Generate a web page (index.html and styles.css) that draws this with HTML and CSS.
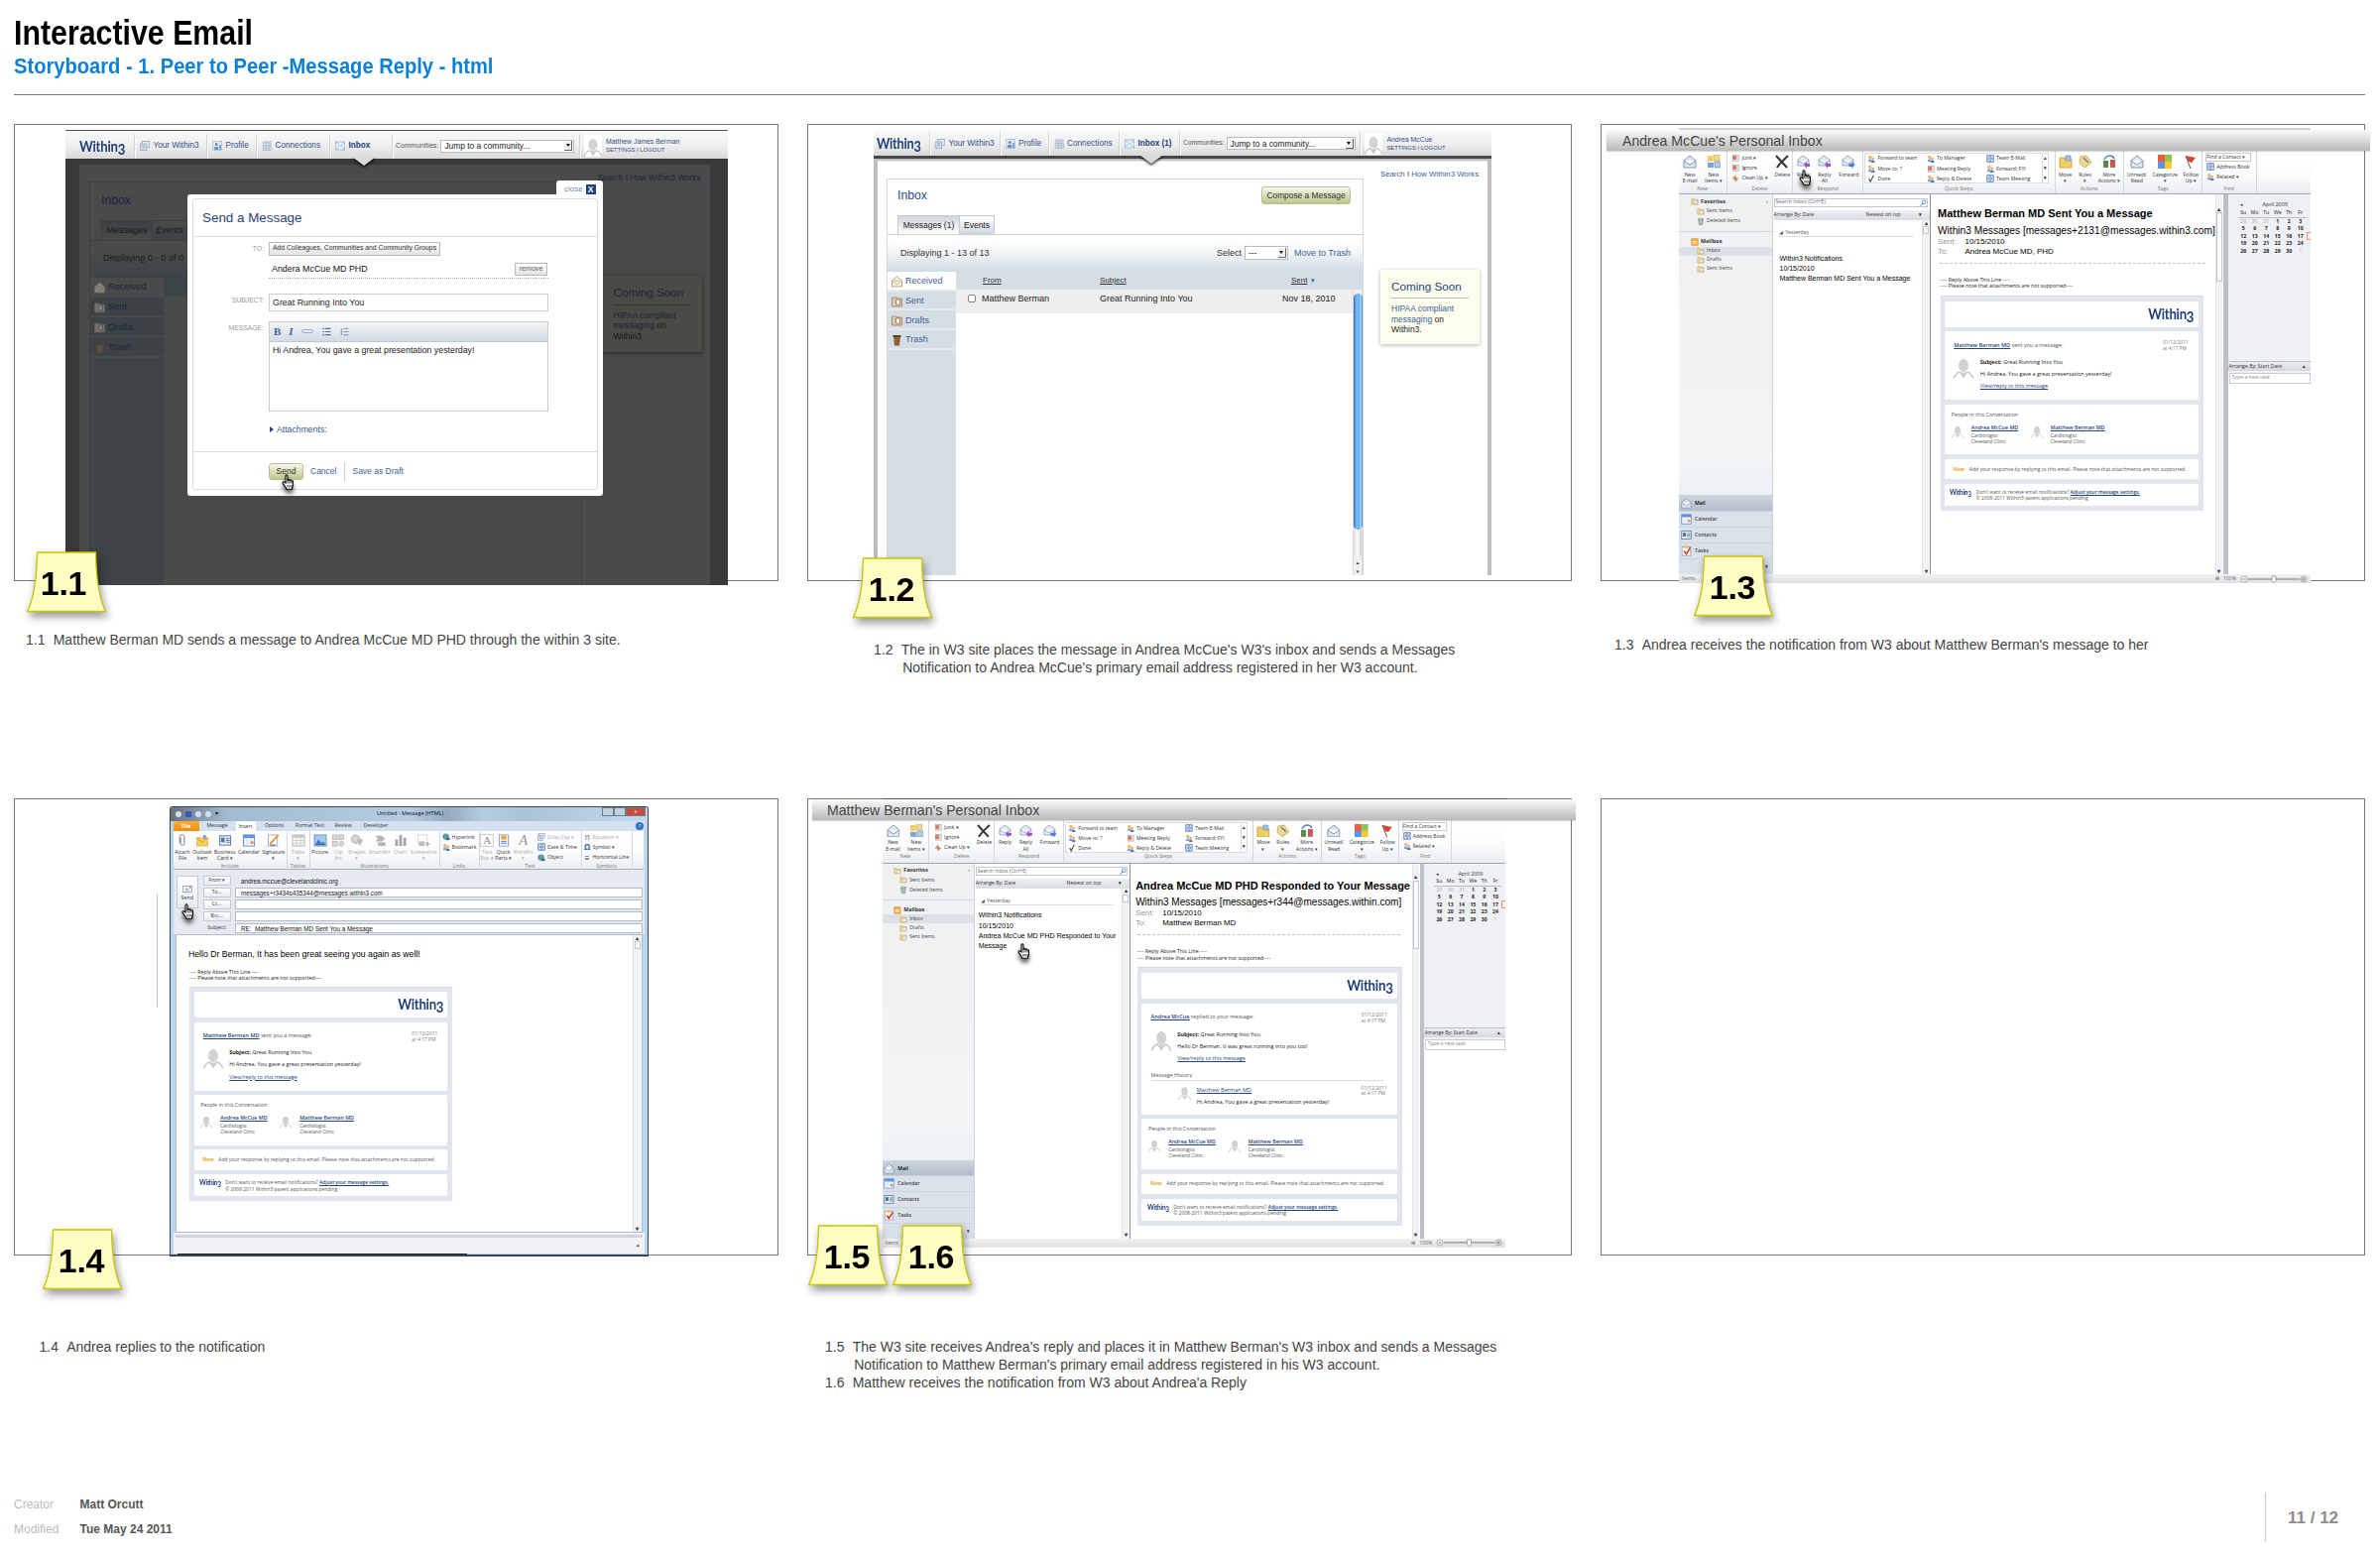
FILE: index.html
```html
<!DOCTYPE html>
<html lang="en">
<head>
<meta charset="utf-8">
<title>Interactive Email</title>
<link rel="stylesheet" href="styles.css">
</head>
<body>
<svg class="defs" aria-hidden="true">
  <symbol id="person" viewBox="0 0 20 20"><ellipse cx="10" cy="7" rx="5" ry="6.5" fill="#d2d2d2"/><path d="M0.5 20c1-4 4-6 6-6.500l3.500 5 3.500-5c2 .5 5 2.500 6 6.500" fill="none" stroke="#c6c6c6" stroke-width="1.500"/><path d="M8 14l2 6 2-6z" fill="#ccc"/></symbol>
  <symbol id="mail" viewBox="0 0 14 14"><path d="M1 6l6-5 6 5v7H1z" fill="#dfe8f2" stroke="#8499b3"/><path d="M1 6l6 4 6-4" fill="#fff" stroke="#8499b3"/></symbol>
  <symbol id="reply" viewBox="0 0 14 14"><path d="M1 5l5-4 6 4v6H1z" fill="#e4edf6" stroke="#8499b3" stroke-width=".8"/><path d="M1 6l5.500 3L12 6" fill="#fff" stroke="#8499b3" stroke-width=".8"/><path d="M7 10l3-3v2h3v3h-3v2z" fill="#a84bc8"/></symbol>
  <symbol id="forward" viewBox="0 0 14 14"><path d="M1 5l5-4 6 4v6H1z" fill="#e4edf6" stroke="#8499b3" stroke-width=".8"/><path d="M1 6l5.500 3L12 6" fill="#fff" stroke="#8499b3" stroke-width=".8"/><path d="M13.500 10l-3-3v2h-3v3h3v2z" fill="#4a7fd0"/></symbol>
  <symbol id="items" viewBox="0 0 14 14"><rect x="1" y="1" width="5" height="6" fill="#f3cf63"/><rect x="7" y="0" width="6" height="6" fill="#f6d98a" stroke="#b79a49" stroke-width=".5"/><rect x="1" y="8" width="6" height="5" fill="#7ca3d4"/><rect x="8" y="7" width="6" height="6" fill="#b6cbe5" stroke="#5079ae" stroke-width=".5"/></symbol>
  <symbol id="cross" viewBox="0 0 14 14"><path d="M1 1l11 12M13 1C9 5 5 8 2 13" stroke="#333" stroke-width="2" fill="none"/></symbol>
  <symbol id="folder" viewBox="0 0 14 14"><path d="M1 3h5l1 2h6v8H1z" fill="#f3cd62" stroke="#c79a36" stroke-width=".8"/><path d="M7 1h5v5H7z" fill="#9fc0e8" stroke="#5b82b8" stroke-width=".6"/></symbol>
  <symbol id="rules" viewBox="0 0 14 14"><path d="M2 2l6-1 5 7-7 5-5-5z" fill="#f4d886" stroke="#b99947" stroke-width=".7"/><path d="M5 3l5 5" stroke="#5b82b8" stroke-width="1.500"/></symbol>
  <symbol id="more" viewBox="0 0 14 14"><rect x="1" y="6" width="5" height="7" fill="#5b8a4e"/><rect x="8" y="5" width="5" height="8" fill="#c15a53"/><path d="M2 5c2-5 8-5 10-1" stroke="#5683b9" fill="none" stroke-width="1.500"/></symbol>
  <symbol id="cats" viewBox="0 0 14 14"><rect width="7" height="7" fill="#ed5b45"/><rect x="7" width="7" height="7" fill="#8fc64d"/><rect y="7" width="7" height="7" fill="#5b94e3"/><rect x="7" y="7" width="7" height="7" fill="#f7c832"/></symbol>
  <symbol id="flag" viewBox="0 0 14 14"><path d="M2 1l10 2-4 5-3-1z" fill="#e0402c"/><path d="M2 1l5 13" stroke="#556" stroke-width="1"/></symbol>
  <symbol id="people" viewBox="0 0 10 10"><circle cx="3.500" cy="3" r="2" fill="#f0b653"/><path d="M1 9c0-5 5-5 5 0z" fill="#7aa5dc"/><circle cx="7" cy="5" r="1.600" fill="#e9a06a"/><path d="M5 10c0-4 4.500-4 4.500 0z" fill="#4f77b5"/></symbol>
  <symbol id="tick" viewBox="0 0 10 10"><path d="M2 5l2 4 4-8" stroke="#444" fill="none" stroke-width="1.300"/></symbol>
  <symbol id="nofolk" viewBox="0 0 10 10"><rect x="2" y="2" width="7" height="7" fill="#e7ecf2" stroke="#8a99ad" stroke-width=".7"/><circle cx="4" cy="5" r="2.800" fill="#e2795a"/></symbol>
  <symbol id="broom" viewBox="0 0 10 10"><path d="M5 1v8M1 5h8" stroke="#e0a93a" stroke-width="2"/><path d="M3 3l4 4" stroke="#a25bb8" stroke-width="1.500"/></symbol>
  <symbol id="book" viewBox="0 0 10 10"><rect x="1" y="1" width="8" height="8" fill="#dfe9f6" stroke="#3d67ab"/><path d="M5 1v8M3 6V4M7 6V4" stroke="#3d67ab"/></symbol>
  <symbol id="sfolder" viewBox="0 0 10 10"><path d="M1 2h3l1 1h4v6H1z" fill="#f5da83" stroke="#c9a24b" stroke-width=".7"/><rect x="4" y="4" width="4.500" height="4.500" fill="#e9f0f8" stroke="#8fa7c6" stroke-width=".5"/></symbol>
  <symbol id="box" viewBox="0 0 10 10"><rect x="1" y="1" width="8" height="8" fill="#f3a640" stroke="#d98a1f" stroke-width=".7"/><path d="M2 4.500h6M2 6.500h6" stroke="#fff" stroke-width="1"/></symbol>
  <symbol id="bin" viewBox="0 0 10 10"><path d="M2 2h6L7 9.500H3z" fill="#a9c3b4" stroke="#5a7d73" stroke-width=".7"/><ellipse cx="5" cy="2" rx="3" ry="1" fill="#dce9e2" stroke="#5a7d73" stroke-width=".5"/></symbol>
  <symbol id="hand" viewBox="0 0 14 16"><path d="M4 9V1.800c0-1.400 2-1.400 2 0V6l1-.5 1 .8 1.200-.4.8.9 1.400.1V11c0 2-.9 2.500-.9 4.300H5C4.600 13 1.800 11 1 9c-.3-1.200 1-1.600 1.800-.8z" fill="#fff" stroke="#000" stroke-width="1.100"/><path d="M6 6v3.500M8 6.500V9.500M10 7v2.500M6 11v2.500M8 11v2.500M10 11v2.500" stroke="#000" stroke-width=".8"/></symbol>
  <symbol id="note" viewBox="0 0 80 62"><path d="M10.500 1h59C70 20 71 42 79.300 60.500H.7C9 42 10 20 10.500 1z" fill="#fefdc3" stroke="#c9c400" stroke-width="1.300"/></symbol>
  <symbol id="lens" viewBox="0 0 10 10"><circle cx="6" cy="4" r="2.800" fill="#e4f1fc" stroke="#3e78b9"/><path d="M4 6L1 9.500" stroke="#3e78b9" stroke-width="1.400"/></symbol>
  <symbol id="pg" viewBox="0 0 10 10"><rect x="2" y=".5" width="7" height="6" fill="#e9f0f7" stroke="#8ba4c0" stroke-width=".8"/><rect x=".5" y="3" width="6" height="6.500" fill="#dbe6f0" stroke="#8ba4c0" stroke-width=".8"/><path d="M2 5h3M2 7h3" stroke="#6f93bb" stroke-width=".8"/></symbol>
  <symbol id="prof" viewBox="0 0 10 10"><rect x=".5" y=".5" width="9" height="9" fill="#e3ebf3" stroke="#9db3cb" stroke-width=".7"/><circle cx="4" cy="3.500" r="1.500" fill="#5f8fc4"/><path d="M2 9V6h4v3zM7 9V4h1.500v5z" fill="#5f8fc4"/></symbol>
  <symbol id="conn" viewBox="0 0 10 10"><g fill="#dce6ef" stroke="#95acc5" stroke-width=".7"><circle cx="2" cy="1.800" r="1.200"/><circle cx="5" cy="1.800" r="1.200"/><circle cx="8" cy="1.800" r="1.200"/><path d="M1 4h2v5.500H1zM4 4h2v5.500H4zM7 4h2v5.500H7z"/></g></symbol>
  <symbol id="inb" viewBox="0 0 10 10"><rect x=".5" y="1" width="9" height="8" fill="#eef4fa" stroke="#8fb0d4" stroke-width=".8"/><path d="M.5 1L5 5.500 9.500 1M.5 9L4 5M9.500 9L6 5" fill="none" stroke="#8fb0d4" stroke-width=".8"/></symbol>
  <symbol id="open" viewBox="0 0 12 12"><path d="M1 5l5-4 5 4v6H1z" fill="#fbf6ee" stroke="#b8976d" stroke-width=".9"/><path d="M3 5h6M1 5l5 4 5-4" fill="none" stroke="#b8976d" stroke-width=".8"/></symbol>
  <symbol id="bfold" viewBox="0 0 12 12"><path d="M1 2h4l1 1h5v8H1z" fill="#dccab2" stroke="#a3835c" stroke-width=".9"/><path d="M5 4h4v5H5z" fill="#fff" stroke="#8e6c43" stroke-width=".8"/></symbol>
  <symbol id="cup" viewBox="0 0 12 12"><path d="M2.500 2h7l-1 9.500h-5z" fill="#8c6236"/><path d="M2 1h8v2H2z" fill="#5d3d1b"/></symbol>
  <symbol id="clip" viewBox="0 0 14 14"><path d="M5 4v6c0 3 4 3 4 0V3c0-3-5-3-5 0v7" fill="none" stroke="#777" stroke-width="1"/></symbol>
  <symbol id="oitem" viewBox="0 0 14 14"><path d="M1 4h12v9H1z" fill="#f6cf58" stroke="#c79a36" stroke-width=".6"/><path d="M1 4l6 5 6-5" fill="none" stroke="#c79a36"/><path d="M8 1h3v4H8z" fill="#7b9bd0"/></symbol>
  <symbol id="card" viewBox="0 0 14 14"><rect x="1" y="2" width="12" height="10" fill="#e6eef8" stroke="#56749d"/><rect x="2.500" y="4" width="4" height="5" fill="#56749d"/><path d="M8 5h4M8 7h4M8 9h4" stroke="#56749d"/></symbol>
  <symbol id="cal" viewBox="0 0 14 14"><rect x="1" y="1" width="12" height="12" fill="#fff" stroke="#5d86c5"/><rect x="1" y="1" width="12" height="3.500" fill="#5d93e0"/><path d="M1 7.500h12M1 10h12M5 4v9M9 4v9" stroke="#b7c8e0" stroke-width=".6"/><rect x="9" y="8" width="3" height="2.500" fill="#e7814b"/></symbol>
  <symbol id="sign" viewBox="0 0 14 14"><rect x="1" y="1" width="10" height="12" fill="#fff" stroke="#8a9bb5" stroke-width=".8"/><path d="M3 11l9-10" stroke="#d89a36" stroke-width="2"/><path d="M3 12h6" stroke="#446"/></symbol>
  <symbol id="task" viewBox="0 0 14 14"><rect x="1.500" y="2" width="11" height="11" fill="#fff" stroke="#8a9bb5"/><rect x="4" y=".5" width="5" height="3" fill="#f3bd4a"/><path d="M4 7l3 4 5-8" fill="none" stroke="#d93a2b" stroke-width="2"/></symbol>
  <symbol id="tbl" viewBox="0 0 14 14"><rect x=".5" y="1" width="13" height="12" fill="#f6f6f6" stroke="#b3b3b3"/><rect x="1" y="1" width="12" height="3" fill="#c4c4c4"/><path d="M1 7h12M1 10h12M5 4v9M9 4v9" stroke="#c4c4c4" stroke-width=".7"/></symbol>
  <symbol id="art" viewBox="0 0 14 14"><g fill="#d9d9d9" stroke="#adadad" stroke-width=".8"><rect x="1" y="1" width="5" height="5"/><rect x="8" y="1" width="5" height="5"/><rect x="1" y="8" width="5" height="5"/><circle cx="10.500" cy="10.500" r="2.500"/></g></symbol>
  <symbol id="pic" viewBox="0 0 14 14"><rect x=".5" y="1" width="13" height="12" fill="#9fc9f3" stroke="#7b95b3"/><path d="M1 12l4-6 3 4 2-2 3 4z" fill="#3b76b8"/></symbol>
  <symbol id="shape" viewBox="0 0 14 14"><circle cx="5.500" cy="5.500" r="4.500" fill="#d6d6d6" stroke="#aaa"/><path d="M7 5h6v3l-3 5-3-5z" fill="#bdbdbd"/></symbol>
  <symbol id="smart" viewBox="0 0 14 14"><path d="M2 2h7l4 3-4 3H2l3-3zM5 9h8v4H5z" fill="#b5b5b5"/></symbol>
  <symbol id="chart" viewBox="0 0 14 14"><path d="M1 6h3v7H1zM5.500 1h3v12h-3zM10 4h3v9h-3z" fill="#a5a5a5"/></symbol>
  <symbol id="shot" viewBox="0 0 14 14"><rect x="1" y="1" width="10" height="8" fill="none" stroke="#b5b5b5" stroke-dasharray="1.500 1"/><rect x="2" y="8" width="6" height="5" fill="#bbb"/><path d="M9 11h5M11.500 8.500v5" stroke="#999"/></symbol>
  <symbol id="parts" viewBox="0 0 14 14"><rect x="2" y="1" width="10" height="12" fill="#fff" stroke="#8a9bb5"/><rect x="4" y="2" width="6" height="4" fill="#f0a440"/><path d="M4 8h6M4 10h6" stroke="#5d93e0" stroke-width="1.400"/></symbol>
  <symbol id="globe" viewBox="0 0 10 10"><circle cx="4.500" cy="4.500" r="4" fill="#4a93c8"/><path d="M2 3l3-1 1 3-3 2z" fill="#69b34c"/><rect x="5" y="6" width="4.500" height="3" fill="#4a6b95"/></symbol>
</svg>

<header class="top">
  <h1>Interactive Email</h1>
  <h2>Storyboard - 1. Peer to Peer -Message Reply - html</h2>
</header>

<main class="board">
  <!-- 1.1 compose in the site -->
  <section class="cell">
    <div class="frame">
      <div class="screen site s1">
        <div class="sitebar">
          <div class="logo">Within<i>3</i></div>
          <div class="nv"><svg><use href="#pg"/></svg>Your Within3</div>
          <div class="nv"><svg><use href="#prof"/></svg>Profile</div>
          <div class="nv"><svg><use href="#conn"/></svg>Connections</div>
          <div class="nv on"><svg><use href="#inb"/></svg>Inbox</div>
          <div class="nv comm">Communities: <span class="sel">Jump to a community...<b></b></span></div>
          <div class="nv user"><svg><use href="#person"/></svg><p>Matthew James Berman<br><small>SETTINGS I LOGOUT</small></p></div>
        </div>
        <div class="dark">
          <div class="how"><a>Search</a> I <a>How Within3 Works</a></div>
          <div class="cols">
            <div class="panel">
              <div class="ptitle">Inbox</div>
              <div class="tabs"><span class="act">Messages</span><span>Events</span></div>
              <div class="disp">Displaying 0 - 0 of 0</div>
              <div class="boxes">
                <div class="folders"><p class="rec"><svg><use href="#open"/></svg>Received</p><p><svg><use href="#bfold"/></svg>Sent</p><p><svg><use href="#bfold"/></svg>Drafts</p><p><svg><use href="#cup"/></svg>Trash</p></div>
                <div class="thead"></div>
              </div>
            </div>
            <div class="soon"><h4>Coming Soon</h4><a>HIPAA compliant<br>messaging</a> on<br>Within3.</div>
          </div>
        </div>
        <div class="arrow"></div>
        <div class="modal">
          <div class="close">close <b>X</b></div>
          <div class="mbody">
            <div class="mtitle">Send a Message</div>
            <div class="form">
              <label>TO:</label>
              <div class="to"><span class="gbtn">Add Colleagues, Communities and Community Groups</span><div class="who">Andera McCue MD PHD<span class="gbtn rm">remove</span></div></div>
              <label>SUBJECT:</label>
              <div class="field">Great Running Into You</div>
              <label>MESSAGE:</label>
              <div class="editor"><div class="tool"><b>B</b><i>I</i><u></u><svg viewBox="0 0 10 10"><path d="M1 1.500h2M1 5h2M1 8.500h2M4 1.500h6M4 5h6M4 8.500h6" stroke="#4d6c9b" stroke-width="1.300"/></svg><svg viewBox="0 0 10 10"><path d="M2 1v8M4 1.500h6M4 5h6M4 8.500h6" stroke="#7f93b3" stroke-width="1.100"/></svg></div><div class="txt">Hi Andrea, You gave a great presentation yesterday!</div></div>
            </div>
            <div class="att"><b></b>Attachments:</div>
            <div class="acts"><span class="green">Send</span><a>Cancel</a><a class="sv">Save as Draft</a></div>
          </div>
        </div>
        <svg class="hand h1"><use href="#hand"/></svg>
      </div>
      <div class="note n1"><svg><use href="#note"/></svg><b>1.1</b></div>
    </div>
    <div class="cap c1"><span>1.1</span><p>Matthew Berman MD sends a message to Andrea McCue MD PHD through the within 3 site.</p></div>
  </section>

  <!-- 1.2 inbox in the site -->
  <section class="cell">
    <div class="frame">
      <div class="screen site s2">
        <div class="sitebar">
          <div class="logo">Within<i>3</i></div>
          <div class="nv"><svg><use href="#pg"/></svg>Your Within3</div>
          <div class="nv"><svg><use href="#prof"/></svg>Profile</div>
          <div class="nv"><svg><use href="#conn"/></svg>Connections</div>
          <div class="nv on"><svg><use href="#inb"/></svg>Inbox (1)</div>
          <div class="nv comm">Communities: <span class="sel">Jump to a community...<b></b></span></div>
          <div class="nv user"><svg><use href="#person"/></svg><p>Andrea McCue<br><small>SETTINGS I LOGOUT</small></p></div>
        </div>
        <div class="light">
          <div class="panel">
            <div class="ptitle">Inbox<span class="green">Compose a Message</span></div>
            <div class="tabs"><span class="act">Messages (1)</span><span>Events</span></div>
            <div class="disp">Displaying 1 - 13 of 13<em>Select</em><span class="sel">---<b></b></span><a>Move to Trash</a></div>
            <div class="boxes">
              <div class="folders"><p class="rec"><svg><use href="#open"/></svg>Received</p><p><svg><use href="#bfold"/></svg>Sent</p><p><svg><use href="#bfold"/></svg>Drafts</p><p><svg><use href="#cup"/></svg>Trash</p></div>
              <div class="mails">
                <div class="thead"><u>From</u><u>Subject</u><span><u>Sent</u> <small>▼</small></span></div>
                <div class="mrow"><i></i><span>Matthew Berman</span><span>Great Running Into You</span><span>Nov 18, 2010</span></div>
              </div>
              <div class="aqua"><div class="thumb"></div><div class="rest"></div><b>▲</b><b>▼</b></div>
            </div>
          </div>
          <div class="side">
            <div class="how"><a>Search</a> I <a>How Within3 Works</a></div>
            <div class="soon"><h4>Coming Soon</h4><a>HIPAA compliant<br>messaging</a> on<br>Within3.</div>
          </div>
        </div>
        <div class="arrow"></div>
      </div>
      <div class="note n2"><svg><use href="#note"/></svg><b>1.2</b></div>
    </div>
    <div class="cap c2"><span>1.2</span><p>The in W3 site places the message in Andrea McCue's W3's inbox and sends a Messages<br><s></s>Notification to Andrea McCue's primary email address registered in her W3 account.</p></div>
  </section>

  <!-- 1.3 notification in Andrea's mail client -->
  <section class="cell">
    <div class="frame">
      <div class="strip st3"></div>
      <div class="screen ol o3">
        <div class="rib">
          <div class="g"><div class="r"><p class="bb"><svg><use href="#mail"/></svg>New<br>E-mail</p><p class="bb"><svg><use href="#items"/></svg>New<br>Items ▾</p></div><h6>New</h6></div>
          <div class="g"><div class="r"><div class="sm"><p><svg><use href="#nofolk"/></svg>Junk ▾</p><p><svg><use href="#nofolk"/></svg>Ignore</p><p><svg><use href="#broom"/></svg>Clean Up ▾</p></div><p class="bb"><svg><use href="#cross"/></svg>Delete</p></div><h6>Delete</h6></div>
          <div class="g"><div class="r"><p class="bb"><svg><use href="#reply"/></svg>Reply</p><p class="bb"><svg><use href="#reply"/></svg>Reply<br>All</p><p class="bb"><svg><use href="#forward"/></svg>Forward</p></div><h6>Respond</h6></div>
          <div class="g"><div class="r"><div class="qs"><p><svg><use href="#people"/></svg>Forward to team</p><p><svg><use href="#people"/></svg>To Manager</p><p><svg><use href="#book"/></svg>Team E-Mail</p><p><svg><use href="#people"/></svg>Move to: ?</p><p><svg><use href="#nofolk"/></svg>Meeting Reply</p><p><svg><use href="#people"/></svg>Forward: FYI</p><p><svg><use href="#tick"/></svg>Done</p><p><svg><use href="#people"/></svg>Reply &amp; Delete</p><p><svg><use href="#book"/></svg>Team Meeting</p></div><div class="spin"><b>▴</b><b>▾</b><b>▾</b></div></div><h6>Quick Steps</h6></div>
          <div class="g"><div class="r"><p class="bb"><svg><use href="#folder"/></svg>Move<br>▾</p><p class="bb"><svg><use href="#rules"/></svg>Rules<br>▾</p><p class="bb"><svg><use href="#more"/></svg>More<br>Actions ▾</p></div><h6>Actions</h6></div>
          <div class="g"><div class="r"><p class="bb"><svg><use href="#mail"/></svg>Unread/<br>Read</p><p class="bb"><svg><use href="#cats"/></svg>Categorize<br>▾</p><p class="bb"><svg><use href="#flag"/></svg>Follow<br>Up ▾</p></div><h6>Tags</h6></div>
          <div class="g"><div class="r"><div class="sm"><p class="fc">Find a Contact ▾</p><p><svg><use href="#book"/></svg>Address Book</p><p><svg><use href="#people"/></svg>Related ▾</p></div></div><h6>Find</h6></div>
        </div>
        <div class="main">
          <div class="nav">
            <div class="tree"><p class="hd"><svg><use href="#sfolder"/></svg><b>Favorites</b><em>‹</em></p><p><svg><use href="#sfolder"/></svg>Sent Items</p><p><svg><use href="#bin"/></svg>Deleted Items</p><p class="hd mb"><svg><use href="#box"/></svg><b>Mailbox</b></p><p class="cur"><svg><use href="#sfolder"/></svg>Inbox</p><p><svg><use href="#sfolder"/></svg>Drafts</p><p><svg><use href="#sfolder"/></svg>Sent Items</p></div>
            <div class="mods"><p class="mm"><svg><use href="#mail"/></svg>Mail</p><p><svg><use href="#cal"/></svg>Calendar</p><p><svg><use href="#card"/></svg>Contacts</p><p><svg><use href="#task"/></svg>Tasks</p><p class="l">▾</p></div>
          </div>
          <div class="list">
            <div class="srch">Search Inbox (Ctrl+E)<svg><use href="#lens"/></svg></div>
            <div class="arr"><span>Arrange By: Date</span><span>Newest on top</span><b>▾</b></div>
            <div class="lb">
              <div class="li"><div class="yest">◢ &nbsp;Yesterday</div><p>Within3 Notifications<br>10/15/2010<br>Matthew Berman MD Sent You a Message</p></div>
              <div class="sb"><b>▴</b><i></i><b>▾</b></div>
            </div>
          </div>
          <div class="read">
            <div class="rc">
              <h3>Matthew Berman MD Sent You a Message</h3>
              <div class="from">Within3 Messages [messages+2131@messages.within3.com]</div>
              <div class="meta"><span>Sent:</span>10/15/2010</div>
              <div class="meta"><span>To:</span>Andrea McCue MD, PHD</div>
              <div class="dots"></div>
              <div class="email">
                <div class="above">---- Reply Above This Line ----<br>---- Please note that attachments are not supported----</div>
                <div class="ep">
                  <div class="card k1"><div class="logo">Within<i>3</i></div></div>
                  <div class="card k2"><div class="eh"><span><a>Matthew Berman MD</a> sent you a message:</span><time>01/12/2011<br>at 4:17 PM</time></div><div class="em"><svg><use href="#person"/></svg><p><b>Subject:</b> Great Running Into You<br>Hi Andrea, You gave a great presentation yesterday!<br><a>View/reply to this message</a></p></div></div>
                  <div class="card k3"><h5>People in this Conversation</h5><div class="pp"><div><svg><use href="#person"/></svg><p><a>Andrea McCue MD</a>Cardiologist<br>Cleveland Clinic</p></div><div><svg><use href="#person"/></svg><p><a>Matthew Berman MD</a>Cardiologist<br>Cleveland Clinic</p></div></div></div>
                  <div class="card k4"><b>New</b>Add your response by replying to this email. Please note that attachments are not supported.</div>
                  <div class="card k5"><div class="logo">Within<i>3</i></div><p>Don't want to receive email notifications? <a>Adjust your message settings.</a><br>© 2008-2011 Within3 patent applications pending</p></div>
                </div>
              </div>
            </div>
            <div class="sb"><b>▴</b><i></i><b>▾</b></div>
          </div>
          <div class="todo">
            <div class="cal"><h5>◂<span>April 2009</span></h5><div class="days"><u>Su</u><u>Mo</u><u>Tu</u><u>We</u><u>Th</u><u>Fr</u><i>29</i><i>30</i><i>31</i><b>1</b><b>2</b><b>3</b><b>5</b><b>6</b><b>7</b><b>8</b><b>9</b><b>10</b><b>12</b><b>13</b><b>14</b><b>15</b><b>16</b><b>17</b><b>19</b><b>20</b><b>21</b><b>22</b><b>23</b><b>24</b><b>26</b><b>27</b><b>28</b><b>29</b><b>30</b><i>1</i></div><div class="today"></div></div>
            <div class="ab">Arrange By: Start Date<b>▴</b></div>
            <div class="nt">Type a new task</div>
          </div>
        </div>
        <div class="stat"><span>Items</span><span class="z">⊞ &nbsp; 100%</span><svg viewBox="0 0 68 8"><circle cx="4" cy="4" r="3" fill="#fff" stroke="#888" stroke-width=".7"/><path d="M2.500 4h3M8 4h52M62.500 4h3M64 2.500v3" stroke="#777" stroke-width="1"/><path d="M32 1h4v5l-2 1.500-2-1.500z" fill="#fff" stroke="#888" stroke-width=".7"/><circle cx="64" cy="4" r="3" fill="none" stroke="#888" stroke-width=".7"/></svg></div>
      </div>
      <div class="tbar t3">Andrea McCue's Personal Inbox</div>
      <svg class="hand h3"><use href="#hand"/></svg>
      <div class="note n3"><svg><use href="#note"/></svg><b>1.3</b></div>
    </div>
    <div class="cap c3"><span>1.3</span><p>Andrea receives the notification from W3 about Matthew Berman's message to her</p></div>
  </section>

  <!-- 1.4 the reply window -->
  <section class="cell">
    <div class="frame">
      <div class="vline"></div>
      <div class="screen win">
        <div class="wt"><span class="qa"><i></i><i class="sq"></i><i></i><i></i> ▾</span><span>Untitled - Message (HTML)</span><span class="wb"><i></i><i></i><i class="x">x</i></span></div>
        <div class="wtabs"><b>File</b><span>Message</span><span class="ins">Insert</span><span>Options</span><span>Format Text</span><span>Review</span><span>Developer</span><em>?</em></div>
        <div class="rib">
          <div class="g"><div class="r"><p class="bb"><svg><use href="#clip"/></svg>Attach<br>File</p><p class="bb"><svg><use href="#oitem"/></svg>Outlook<br>Item</p><p class="bb"><svg><use href="#card"/></svg>Business<br>Card ▾</p><p class="bb"><svg><use href="#cal"/></svg>Calendar</p><p class="bb"><svg><use href="#sign"/></svg>Signature<br>▾</p></div><h6>Include</h6></div>
          <div class="g"><div class="r"><p class="bb off"><svg><use href="#tbl"/></svg>Table<br>▾</p></div><h6>Tables</h6></div>
          <div class="g"><div class="r"><p class="bb"><svg><use href="#pic"/></svg>Picture</p><p class="bb off"><svg><use href="#art"/></svg>Clip<br>Art</p><p class="bb off"><svg><use href="#shape"/></svg>Shapes<br>▾</p><p class="bb off"><svg><use href="#smart"/></svg>SmartArt</p><p class="bb off"><svg><use href="#chart"/></svg>Chart</p><p class="bb off"><svg><use href="#shot"/></svg>Screenshot<br>▾</p></div><h6>Illustrations</h6></div>
          <div class="g"><div class="r"><div class="sm"><p><svg><use href="#globe"/></svg>Hyperlink</p><p><svg><use href="#people"/></svg>Bookmark</p></div></div><h6>Links</h6></div>
          <div class="g"><div class="r"><p class="bb off"><span class="ic ta">A</span>Text<br>Box ▾</p><p class="bb"><svg><use href="#parts"/></svg>Quick<br>Parts ▾</p><p class="bb off"><span class="ic wa">A</span>WordArt<br>▾</p><div class="sm"><p class="off"><svg><use href="#pg"/></svg>Drop Cap ▾</p><p><svg><use href="#book"/></svg>Date &amp; Time</p><p><svg><use href="#globe"/></svg>Object</p></div></div><h6>Text</h6></div>
          <div class="g"><div class="r"><div class="sm sy"><p class="off"><b>π</b>Equation ▾</p><p><b class="om">Ω</b>Symbol ▾</p><p><b>≡</b>Horizontal Line</p></div></div><h6>Symbols</h6></div>
          <div class="g"></div>
        </div>
        <div class="hdr">
          <div class="sendb"><svg viewBox="0 0 12 9"><rect x=".5" y=".5" width="11" height="8" fill="#fff" stroke="#7c93b5"/><path d="M3 4h4M3 6h5" stroke="#5d86c5"/><rect x="8.500" y="1.500" width="2" height="2" fill="#d9583a"/></svg><span>Send</span></div>
          <div class="fl">
            <b>From ▾</b><span class="pl">andrea.mccue@clevelandclinic.org</span>
            <b>To...</b><span>messages+r3434s435344@messages.within3.com</span>
            <b>Cc...</b><span></span>
            <b>Bcc...</b><span></span>
            <b class="pl">Subject:</b><span>RE: &nbsp;Matthew Berman MD Sent You a Message</span>
          </div>
        </div>
        <div class="wbody">
          <div class="wc">
            <div class="hello">Hello Dr Berman, It has been great seeing you again as well!</div>
            <div class="email">
              <div class="above">---- Reply Above This Line ----<br>---- Please note that attachments are not supported----</div>
              <div class="ep">
                <div class="card k1"><div class="logo">Within<i>3</i></div></div>
                <div class="card k2"><div class="eh"><span><a>Matthew Berman MD</a> sent you a message:</span><time>01/12/2011<br>at 4:17 PM</time></div><div class="em"><svg><use href="#person"/></svg><p><b>Subject:</b> Great Running Into You<br>Hi Andrea, You gave a great presentation yesterday!<br><a>View/reply to this message</a></p></div></div>
                <div class="card k3"><h5>People in this Conversation</h5><div class="pp"><div><svg><use href="#person"/></svg><p><a>Andrea McCue MD</a>Cardiologist<br>Cleveland Clinic</p></div><div><svg><use href="#person"/></svg><p><a>Matthew Berman MD</a>Cardiologist<br>Cleveland Clinic</p></div></div></div>
                <div class="card k4"><b>New</b>Add your response by replying to this email. Please note that attachments are not supported.</div>
                <div class="card k5"><div class="logo">Within<i>3</i></div><p>Don't want to receive email notifications? <a>Adjust your message settings.</a><br>© 2008-2011 Within3 patent applications pending</p></div>
              </div>
            </div>
          </div>
          <div class="sb"><b>▴</b><i></i><b>▾</b></div>
        </div>
        <div class="wf"><div></div><p>▴</p></div>
        <div class="shade"></div>
      </div>
      <svg class="hand h4"><use href="#hand"/></svg>
      <div class="note n4"><svg><use href="#note"/></svg><b>1.4</b></div>
    </div>
    <div class="cap c4"><span>1.4</span><p>Andrea replies to the notification</p></div>
  </section>

  <!-- 1.5 / 1.6 notification in Matthew's mail client -->
  <section class="cell">
    <div class="frame">
      <div class="strip st5"></div>
      <div class="screen ol o5">
        <div class="rib">
          <div class="g"><div class="r"><p class="bb"><svg><use href="#mail"/></svg>New<br>E-mail</p><p class="bb"><svg><use href="#items"/></svg>New<br>Items ▾</p></div><h6>New</h6></div>
          <div class="g"><div class="r"><div class="sm"><p><svg><use href="#nofolk"/></svg>Junk ▾</p><p><svg><use href="#nofolk"/></svg>Ignore</p><p><svg><use href="#broom"/></svg>Clean Up ▾</p></div><p class="bb"><svg><use href="#cross"/></svg>Delete</p></div><h6>Delete</h6></div>
          <div class="g"><div class="r"><p class="bb"><svg><use href="#reply"/></svg>Reply</p><p class="bb"><svg><use href="#reply"/></svg>Reply<br>All</p><p class="bb"><svg><use href="#forward"/></svg>Forward</p></div><h6>Respond</h6></div>
          <div class="g"><div class="r"><div class="qs"><p><svg><use href="#people"/></svg>Forward to team</p><p><svg><use href="#people"/></svg>To Manager</p><p><svg><use href="#book"/></svg>Team E-Mail</p><p><svg><use href="#people"/></svg>Move to: ?</p><p><svg><use href="#nofolk"/></svg>Meeting Reply</p><p><svg><use href="#people"/></svg>Forward: FYI</p><p><svg><use href="#tick"/></svg>Done</p><p><svg><use href="#people"/></svg>Reply &amp; Delete</p><p><svg><use href="#book"/></svg>Team Meeting</p></div><div class="spin"><b>▴</b><b>▾</b><b>▾</b></div></div><h6>Quick Steps</h6></div>
          <div class="g"><div class="r"><p class="bb"><svg><use href="#folder"/></svg>Move<br>▾</p><p class="bb"><svg><use href="#rules"/></svg>Rules<br>▾</p><p class="bb"><svg><use href="#more"/></svg>More<br>Actions ▾</p></div><h6>Actions</h6></div>
          <div class="g"><div class="r"><p class="bb"><svg><use href="#mail"/></svg>Unread/<br>Read</p><p class="bb"><svg><use href="#cats"/></svg>Categorize<br>▾</p><p class="bb"><svg><use href="#flag"/></svg>Follow<br>Up ▾</p></div><h6>Tags</h6></div>
          <div class="g"><div class="r"><div class="sm"><p class="fc">Find a Contact ▾</p><p><svg><use href="#book"/></svg>Address Book</p><p><svg><use href="#people"/></svg>Related ▾</p></div></div><h6>Find</h6></div>
        </div>
        <div class="main">
          <div class="nav">
            <div class="tree"><p class="hd"><svg><use href="#sfolder"/></svg><b>Favorites</b><em>‹</em></p><p><svg><use href="#sfolder"/></svg>Sent Items</p><p><svg><use href="#bin"/></svg>Deleted Items</p><p class="hd mb"><svg><use href="#box"/></svg><b>Mailbox</b></p><p class="cur"><svg><use href="#sfolder"/></svg>Inbox</p><p><svg><use href="#sfolder"/></svg>Drafts</p><p><svg><use href="#sfolder"/></svg>Sent Items</p></div>
            <div class="mods"><p class="mm"><svg><use href="#mail"/></svg>Mail</p><p><svg><use href="#cal"/></svg>Calendar</p><p><svg><use href="#card"/></svg>Contacts</p><p><svg><use href="#task"/></svg>Tasks</p><p class="l">▾</p></div>
          </div>
          <div class="list">
            <div class="srch">Search Inbox (Ctrl+E)<svg><use href="#lens"/></svg></div>
            <div class="arr"><span>Arrange By: Date</span><span>Newest on top</span><b>▾</b></div>
            <div class="lb">
              <div class="li"><div class="yest">◢ &nbsp;Yesterday</div><p>Within3 Notifications<br>10/15/2010<br>Andrea McCue MD PHD Responded to Your<br>Message</p></div>
              <div class="sb"><b>▴</b><i></i><b>▾</b></div>
            </div>
          </div>
          <div class="read">
            <div class="rc">
              <h3>Andrea McCue MD PHD Responded to Your Message</h3>
              <div class="from">Within3 Messages [messages+r344@messages.within.com]</div>
              <div class="meta"><span>Sent:</span>10/15/2010</div>
              <div class="meta"><span>To:</span>Matthew Berman MD</div>
              <div class="dots"></div>
              <div class="email">
                <div class="above">---- Reply Above This Line ----<br>---- Please note that attachments are not supported----</div>
                <div class="ep">
                  <div class="card k1"><div class="logo">Within<i>3</i></div></div>
                  <div class="card k2 long"><div class="eh"><span><a>Andrea McCue</a> replied to your message:</span><time>01/12/2011<br>at 4:17 PM</time></div><div class="em"><svg><use href="#person"/></svg><p><b>Subject:</b> Great Running Into You<br>Hello Dr Berman, It was great running into you too!<br><a>View/reply to this message</a></p></div><h5>Message History</h5><div class="hist"><svg><use href="#person"/></svg><p><a>Matthew Berman MD</a><br>Hi Andrea, You gave a great presentation yesterday!</p><time>01/12/2011<br>at 4:17 PM</time></div></div>
                  <div class="card k3"><h5>People in this Conversation</h5><div class="pp"><div><svg><use href="#person"/></svg><p><a>Andrea McCue MD</a>Cardiologist<br>Cleveland Clinic</p></div><div><svg><use href="#person"/></svg><p><a>Matthew Berman MD</a>Cardiologist<br>Cleveland Clinic</p></div></div></div>
                  <div class="card k4"><b>New</b>Add your response by replying to this email. Please note that attachments are not supported.</div>
                  <div class="card k5"><div class="logo">Within<i>3</i></div><p>Don't want to receive email notifications? <a>Adjust your message settings.</a><br>© 2008-2011 Within3 patent applications pending</p></div>
                </div>
              </div>
            </div>
            <div class="sb"><b>▴</b><i></i><b>▾</b></div>
          </div>
          <div class="todo">
            <div class="cal"><h5>◂<span>April 2009</span></h5><div class="days"><u>Su</u><u>Mo</u><u>Tu</u><u>We</u><u>Th</u><u>Fr</u><i>29</i><i>30</i><i>31</i><b>1</b><b>2</b><b>3</b><b>5</b><b>6</b><b>7</b><b>8</b><b>9</b><b>10</b><b>12</b><b>13</b><b>14</b><b>15</b><b>16</b><b>17</b><b>19</b><b>20</b><b>21</b><b>22</b><b>23</b><b>24</b><b>26</b><b>27</b><b>28</b><b>29</b><b>30</b><i>1</i></div><div class="today"></div></div>
            <div class="ab">Arrange By: Start Date<b>▴</b></div>
            <div class="nt">Type a new task</div>
          </div>
        </div>
        <div class="stat"><span>Items</span><span class="z">⊞ &nbsp; 100%</span><svg viewBox="0 0 68 8"><circle cx="4" cy="4" r="3" fill="#fff" stroke="#888" stroke-width=".7"/><path d="M2.500 4h3M8 4h52M62.500 4h3M64 2.500v3" stroke="#777" stroke-width="1"/><path d="M32 1h4v5l-2 1.500-2-1.500z" fill="#fff" stroke="#888" stroke-width=".7"/><circle cx="64" cy="4" r="3" fill="none" stroke="#888" stroke-width=".7"/></svg></div>
      </div>
      <div class="tbar t5">Matthew Berman's Personal Inbox</div>
      <svg class="hand h5"><use href="#hand"/></svg>
      <div class="note n5"><svg><use href="#note"/></svg><b>1.5</b></div>
      <div class="note n6"><svg><use href="#note"/></svg><b>1.6</b></div>
    </div>
    <div class="cap c5"><span>1.5</span><p>The W3 site receives Andrea's reply and places it in Matthew Berman's W3 inbox and sends a Messages<br><s></s>Notification to Matthew Berman's primary email address registered in his W3 account.</p><span>1.6</span><p>Matthew receives the notification from W3 about Andrea'a Reply</p></div>
  </section>

  <section class="cell"><div class="frame"></div></section>
</main>

<footer class="foot">
  <dl><dt>Creator</dt><dd>Matt Orcutt</dd><dt>Modified</dt><dd>Tue May 24 2011</dd></dl>
  <div class="pageno">11 / 12</div>
</footer>
</body>
</html>
```

FILE: styles.css
```css
* { box-sizing: border-box; margin: 0; padding: 0; }
body { width: 2400px; height: 1569px; overflow: hidden; background: #fff; color: #000; font-family: "Liberation Sans", Arial, sans-serif; display: flex; flex-direction: column; }
svg { display: block; flex: none; }
.defs { position: absolute; width: 0; height: 0; }
i, em { font-style: normal; }

/* page header */
.top { margin: 0 15px 0 14px; height: 96px; border-bottom: 1px solid #777; padding-top: 14px; display: flex; flex-direction: column; align-items: flex-start; white-space: nowrap; }
h1 { font-size: 34.500px; line-height: 38px; transform: scaleX(.879); transform-origin: 0 0; }
h2 { font-size: 22.500px; line-height: 28px; margin-top: 1px; color: #0b80d8; transform: scaleX(.895); transform-origin: 0 0; }

/* board */
.board { margin: 29px 15px 0 14px; display: grid; grid-template-columns: repeat(3, 771px); column-gap: 29px; grid-auto-rows: 680px; height: 1361px; }
.frame { position: relative; height: 461px; border: 1px solid #777; }
.screen { position: absolute; overflow: hidden; white-space: nowrap; line-height: 1; }
.cap { display: grid; grid-template-columns: 27.700px auto; justify-content: start; font-size: 14px; line-height: 18px; color: #444; white-space: nowrap; }
.cap s { display: inline-block; width: 1.500px; }
.c1 { margin: 50px 0 0 12px; }
.c2 { margin: 60px 0 0 67px; }
.c3 { margin: 55px 0 0 14px; }
.c4 { margin: 83px 0 0 25.500px; }
.c5 { margin: 83px 0 0 18px; }

/* sticky notes and pointers */
.note { position: absolute; width: 80px; height: 62px; filter: drop-shadow(2px 5px 4px rgba(0,0,0,.4)); }
.note svg { width: 80px; height: 62px; }
.note b { position: absolute; inset: 14px 2px auto 0; text-align: center; font-size: 34px; line-height: 36px; letter-spacing: -.3px; }
.n1 b { right: 6px; }
.n1 { left: 12px; top: 430px; }
.n2 { left: 45px; top: 436px; }
.n3 { left: 93px; top: 433.500px; }
.n4 { left: 28px; top: 433px; }
.n5 { left: 0; top: 429px; }
.n6 { left: 85px; top: 429px; }
.hand { position: absolute; width: 14px; height: 16px; overflow: visible; filter: drop-shadow(0 4px 2px rgba(0,0,0,.6)); }
.h1 { left: 218px; top: 346px; }
.h3 { left: 198.500px; top: 44.500px; }
.h4 { left: 168px; top: 105px; }
.h5 { left: 211px; top: 144.500px; }

/* community site */
.logo { font: 700 15px/1 Lato, sans-serif; color: #1f3f78; letter-spacing: -.3px; transform: scaleX(.85); transform-origin: 0 50%; }
.logo i { display: inline-block; transform: translateY(.2em); }
.site { color: #333; }
.site a { color: #3c5e99; }
.s1 { left: 51px; top: 5px; width: 668px; height: 459px; background: #393939; border-top: 1px solid #555; }
.s2 { left: 66px; top: 5px; width: 623px; height: 449px; background: #fff; }
.sitebar { display: grid; background: linear-gradient(#f9f9f9, #f0f0f0 50%, #d9d9d9); align-items: stretch; color: #2f4f86; font-size: 8.200px; }
.s1 .sitebar { grid-template-columns: 69px 73px 50px 74px 63px 189px 1fr; height: 27.500px; padding-top: 3px; }
.s2 .sitebar { grid-template-columns: 56px 70.600px 49px 71.400px 61px 182.400px 1fr; height: 25.500px; padding-top: 2px; }
.sitebar .logo { align-self: center; font-size: 15.500px; margin-left: 14px; }
.s2 .sitebar .logo { margin-left: 2.500px; font-size: 15px; }
.nv { display: flex; align-items: center; gap: 3px; padding-left: 5px; border-left: 1px solid #d4d4d4; box-shadow: inset 1px 0 #fafafa; }
.nv svg { width: 10.500px; height: 10px; }
.nv.on { font-weight: bold; color: #1f3f78; }
.nv.comm { font-size: 7.100px; color: #555; padding-left: 3px; gap: 2px; }
.s2 .nv.comm { font-size: 6.800px; }
.sel { display: flex; align-items: center; justify-content: space-between; width: 135px; height: 13px; background: #fff; border: 1px solid #bbb; padding: 0 1px 0 3px; font-size: 8.400px; color: #222; }
.s2 .comm .sel { width: 130px; }
.sel b { width: 8px; height: 10px; background: #eee; border-right: 1px solid #666; border-bottom: 1px solid #666; display: flex; align-items: center; justify-content: center; }
.sel b::before { content: ""; border: 2px solid transparent; border-top: 3px solid #111; border-bottom: 0; }
.user svg { width: 18px; height: 22px; background: #fff; padding-top: 3px; }
.nv.user { font-size: 6.900px; line-height: 8px; gap: 4px; padding-left: 4px; }
.user small { font-size: 5.900px; }
.arrow { position: absolute; left: 289px; top: 26px; border: 12px solid transparent; border-top: 9px solid #dadada; border-bottom: 0; filter: drop-shadow(0 2px 1px rgba(0,0,0,.7)); }
.s2 .arrow { left: 268px; top: 25px; }
.dark { margin: 6px 18px 0 14px; height: 430px; background: #4a4a4a; padding: 10.500px 8.500px 0 10px; color: #1d1d1d; }
.dark a, .dark .ptitle, .dark .folders { color: #18243d; }
.how { font-size: 8.200px; text-align: right; }
.dark .how { height: 7px; padding-right: 1px; }
.dark .cols { display: flex; justify-content: space-between; }
.panel { border: solid #d6d6d6; border-width: 1px 1px 0 1px; }
.dark .panel { width: 497px; height: 420px; border-color: #404040; }
.ptitle { font-size: 12.200px; color: #2b4a85; display: flex; align-items: center; justify-content: space-between; }
.dark .ptitle { height: 38px; padding: 0 0 2px 11px; }
.tabs { display: flex; border-bottom: 1px solid #cfcfcf; font-size: 8.500px; color: #222; }
.tabs span { height: 19.500px; width: 36px; display: flex; align-items: center; justify-content: center; border: 1px solid #c4cad0; border-bottom: 0; background: linear-gradient(#fff, #cfd8e0); }
.tabs .act { width: 62px; background: linear-gradient(#cdd6de, #fff); border-right: 0; }
.dark .tabs { border-color: #3d3d3d; padding-left: 11px; color: #181818; font-size: 9px; }
.dark .tabs span { border-color: #3d3d3d; background: linear-gradient(#4a4a4a, #3b4248); }
.dark .tabs .act { width: 51px; background: linear-gradient(#3c4146, #4a4a4a); }
.disp { font-size: 9px; display: flex; align-items: center; background: linear-gradient(#fff 20%, #f1f4f6 50%, #d0dae4); }
.dark .disp { height: 37px; padding-left: 13px; font-size: 9.200px; background: linear-gradient(#4a4a4a 30%, #3c4348); }
.boxes { display: flex; }
.folders { width: 71px; background: #d5dde5; color: #3c5e99; font-size: 9px; }
.folders p { height: 19.700px; display: flex; align-items: center; gap: 2px; padding: 2px 0 0 3px; border-bottom: 2px solid #e3e9ef; }
.folders svg { width: 13px; height: 12px; }
.folders .rec { background: #fff; }
.dark .folders { width: 74px; height: 322px; background: #3e4345; }
.dark .folders p { height: 20.300px; border-color: #464b4d; font-size: 9.200px; background: #3c4246; }
.dark .folders svg { opacity: .35; }
.dark .folders .rec { background: #4a4a4a; }
.dark .thead { width: 420px; height: 19px; background: #3d4448; }
.soon { font-size: 8.500px; line-height: 10.600px; color: #222; background: #fdfded; width: 100px; height: 75px; padding: 10px 11px; box-shadow: 0 1px 4px rgba(0,0,0,.3); }
.soon h4 { font-weight: normal; font-size: 11.700px; line-height: 13px; padding-bottom: 5.500px; border-bottom: 1px solid #bbb; margin-bottom: 5px; color: #24447c; }
.dark .soon { margin-top: 95px; background: #4b4b46; height: 77px; color: #151515; box-shadow: 0 1px 4px rgba(0,0,0,.5); }
.dark .soon h4 { border-color: #333; color: #18243d; }
.s2 .light { height: 424px; border: solid #bdbdbd; border-width: 5px 4px 0; box-shadow: inset 0 1px #eee; position: relative; display: flex; padding: 18px 8px 0 9px; justify-content: space-between; }
.s2 .light::before { content: ""; position: absolute; left: -4px; right: -4px; top: -5px; height: 3px; background: #484848; }
.light .panel { width: 481px; height: 401px; border-bottom: 0; }
.light .ptitle { height: 36px; padding: 0 12px 3px 10px; }
.green { display: flex; align-items: center; justify-content: center; height: 17.500px; border: 1px solid #b9bd9c; border-radius: 3px; background: linear-gradient(#f7f9ec, #d9dfb8 50%, #bcc98a); color: #333; }
.ptitle .green { width: 90px; font-size: 8.400px; }
.light .tabs { padding-left: 10px; }
.light .disp { height: 37px; padding: 0 12px 1px 13px; }
.light .disp em { margin-left: auto; padding-right: 3px; }
.light .disp .sel { width: 44px; height: 14.500px; margin-right: 6px; }
.light .folders { height: 310px; }
.mails { width: 400px; }
.thead { height: 18px; background: #d5dde5; display: flex; align-items: center; font-size: 8px; color: #333; }
.mails .thead { width: 410px; padding-left: 27px; }
.mails .thead u { width: 118px; }
.mails .thead span { margin-left: 75px; }
.mails .thead span u { width: auto; }
.mails small { color: #2c66a8; font-size: 6px; }
.mrow { display: flex; align-items: center; height: 23.500px; background: #eee; font-size: 9px; padding: 0 0 5.500px 12px; color: #222; }
.mrow i { width: 8px; height: 8px; border: 1px solid #888; border-radius: 2px; background: #fff; margin-right: 6px; }
.mrow span { width: 119px; }
.mrow span:nth-of-type(2) { width: 183px; }
.mrow span:last-child { width: auto; margin-left: 1px; }
.aqua { width: 10px; height: 290px; margin-top: 18px; background: #f1f1f1; border: solid #ddd; border-width: 0 1px; display: flex; flex-direction: column; align-items: center; }
.thumb { width: 9px; height: 241px; margin-top: 4px; border-radius: 5px; background: linear-gradient(90deg, #2565b8, #8cc4f7 35%, #5aa5ef 55%, #a8dbfb 80%, #3a7cc4); }
.rest { width: 8px; height: 28px; border-radius: 0 0 5px 5px; background: linear-gradient(90deg, #ddd, #fff, #ccc); margin-bottom: 2px; }
.aqua b { font-size: 4.500px; height: 9px; display: flex; align-items: center; color: #333; }
.side { width: 100px; }
.side .how { margin-top: -8px; text-align: left; font-size: 7.800px; height: 9px; }
.side .soon { margin-top: 91px; }

/* compose dialog */
.modal { position: absolute; left: 123px; top: 64px; width: 419px; height: 304px; background: #fff; border-radius: 3px; padding: 4px 5px; }
.close { position: absolute; right: 0; top: -14px; width: 47px; height: 16px; background: #fff; border-radius: 3px 3px 0 0; display: flex; align-items: center; gap: 3px; padding: 2px 0 0 8px; font-size: 8px; color: #6d8cc0; }
.close b { width: 10px; height: 9.500px; background: #1f3f78; color: #fff; font-size: 8.500px; display: flex; align-items: center; justify-content: center; }
.mbody { height: 294px; border: 1px solid #ddd; border-radius: 3px; }
.mtitle { height: 38px; border-bottom: 1px solid #ddd; padding: 12px 0 0 9px; font-size: 13.400px; color: #2c4374; }
.form { display: grid; grid-template-columns: 71px 282px; column-gap: 5px; font-size: 8.900px; padding-top: 5px; height: 195px; align-content: start; }
.form label { text-align: right; font-size: 6.800px; color: #999; padding-top: 3.500px; }
.gbtn { display: flex; align-items: center; justify-content: center; height: 13.500px; width: 173px; border: 1px solid #bcbcbc; background: linear-gradient(#fff, #e2e2e2); font-size: 6.800px; color: #333; }
.gbtn.rm { width: 33px; margin-left: auto; color: #666; font-size: 7.100px; }
.who { display: flex; align-items: center; border-bottom: 1px dotted #aaa; height: 17px; padding: 0 1px 1px 3px; margin: 6.500px 0 15px; color: #111; }
.field { border: 1px solid #ccc; height: 18px; padding: 4px 3px; color: #222; margin-bottom: 10px; }
.editor { border: 1px solid #ccc; height: 91px; }
.tool { height: 19.500px; border-bottom: 1px solid #bfc9d3; background: linear-gradient(#f3f6f9, #d2dbe4); display: flex; align-items: center; gap: 8px; padding-left: 4px; font: 11px "Liberation Serif", serif; color: #3f66a0; }
.tool i { font-style: italic; font-weight: bold; }
.tool u { width: 12px; height: 4px; border: 1px solid #9fb2c8; border-radius: 2px; }
.tool svg { width: 10px; height: 9px; }
.txt { padding: 4px 3px; color: #222; font-size: 8.800px; }
.att { font-size: 8.700px; color: #35578f; height: 27px; padding: 0 0 0 77px; display: flex; gap: 3px; align-items: flex-start; border-bottom: 1px solid #ddd; margin-top: -5px; }
.att b { border: 3.500px solid transparent; border-left: 4px solid #24447c; border-right: 0; margin-top: 1px; }
.acts { display: flex; align-items: center; padding: 10px 0 0 76px; font-size: 8.500px; }
.acts .green { width: 35px; margin-right: 7px; }
.acts .sv { margin-left: 8px; padding: 5px 0 5px 7px; border-left: 1px solid #ccc; }

/* mail client */
.tbar { position: absolute; width: 770px; height: 21px; background: linear-gradient(#fbfbfb, #b9b9b9); box-shadow: 0 1px 1px rgba(0,0,0,.15); font-size: 14.100px; line-height: 22px; padding-left: 16px; color: #444; white-space: nowrap; }
.t3 { left: 5px; top: 5px; }
.t5 { left: 4px; top: 0; padding-left: 15px; }
.strip { position: absolute; height: 2px; background: #ccd2d8; }
.st3 { left: 78px; top: 3px; width: 637px; }
.st5 { left: 75px; top: -1px; width: 629px; background: #4b5a66; }
.ol { width: 637px; height: 436px; font-family: "Open Sans", "Noto Sans", sans-serif; font-size: 5.200px; color: #333; display: flex; flex-direction: column; background: #fff; }
.o3 { left: 78px; top: 26px; }
.o5 { left: 75.500px; top: 21.500px; zoom: .987; }
.rib { display: grid; background: linear-gradient(#fff, #fafbfc 60%, #e9ecf0); }
.ol .rib { height: 44px; flex: none; grid-template-columns: 48.500px 66.500px 71px 193.500px 69.500px 79px 54.500px; border-bottom: 1px solid #a3a8af; }
.g { border-right: 1px solid #d5d9de; display: flex; flex-direction: column; }
.g .r { height: 33.500px; display: flex; justify-content: space-around; }
h6 { font-size: 5.200px; font-weight: normal; text-align: center; color: #777; height: 8px; line-height: 9px; }
.bb { text-align: center; line-height: 6.400px; flex: none; padding-top: 3.500px; margin: 0 -3px; }
.bb svg, .ic { width: 14px; height: 14px; margin: 0 auto 3px; }
.sm { padding-top: 2px; }
.sm p { height: 10.300px; display: flex; align-items: center; gap: 2px; }
.sm svg, .qs svg { width: 8px; height: 8px; }
.sm .fc { border: 1px solid #ccc; background: #fff; width: 46px; height: 9px; margin-left: -1px; }
.qs { display: grid; grid-template-columns: 59.500px 60px 54px; grid-auto-rows: 10.200px; margin-top: 2px; height: 31px; border: 1px solid #d8dce1; border-right: 0; padding-left: 2px; width: 180px; background: #fff; }
.qs p { display: flex; align-items: center; gap: 2px; }
.spin { width: 7px; margin: 2px 4px 0 -4px; height: 31px; border: 1px solid #d8dce1; display: flex; flex-direction: column; justify-content: space-around; align-items: center; background: #fff; }
.main { display: grid; grid-template-columns: 94.500px 159.500px 299.500px 83.500px; height: 383px; flex: none; }
.nav { background: linear-gradient(#eff0f2, #f2f4f6 70%, #e3ebf2); border-right: 1px solid #cfd4da; display: flex; flex-direction: column; justify-content: space-between; }
.tree { padding-top: 2.500px; }
.tree p { height: 9px; display: flex; align-items: center; gap: 2px; padding-left: 18px; color: #444; }
.tree svg { width: 8px; height: 8px; }
.tree .hd { padding-left: 12px; height: 9.500px; font-size: 5.400px; color: #333; }
.tree .hd em { margin-left: auto; padding-right: 4px; }
.tree p:nth-child(2), .tree p:nth-child(3) { height: 10px; }
.tree .mb { border-top: 1px solid #cfd4da; margin-top: 4.500px; padding-top: 6px; height: 16px; }
.tree .cur { background: #dce1e9; }
.mods { background: #dbe1ea; height: 80px; }
.mods p { height: 16px; display: flex; align-items: center; gap: 3px; padding-left: 2px; border-top: 1px solid #ccd3dd; font-weight: 600; color: #444; }
.mods svg { width: 11px; height: 11px; }
.mods .mm { background: linear-gradient(#cbd3dd, #b3becb); color: #000; }
.mods .l { justify-content: flex-end; padding-right: 4px; }
.list { border-right: 1px solid #8d8d8d; background: #fff; display: flex; flex-direction: column; padding-left: 1px; }
.srch { width: 155px; height: 9px; border: 1px solid #c3c8ce; margin-top: 3.500px; display: flex; align-items: center; justify-content: space-between; padding-left: 1px; color: #666; flex: none; }
.srch svg { width: 7px; height: 7px; }
.arr { display: flex; align-items: center; height: 10px; margin-top: 3px; background: linear-gradient(#eef0f2, #d9dce0); flex: none; padding-right: 8px; }
.arr span:first-child { width: 93px; }
.arr b { margin-left: auto; }
.lb { display: flex; flex: 1; justify-content: space-between; min-height: 0; }
.li { padding-left: 5px; }
.yest { width: 136px; height: 17px; padding-top: 10px; border-bottom: 1px solid #ddd; color: #555; }
.li p { font: 7px/10px "Liberation Sans", sans-serif; color: #000; margin: 17.500px 0 0 1px; }
.o5 .li p { margin: 6px 0 0 -2px; font-size: 7.150px; line-height: 10.200px; }
.sb { width: 7px; background: #f1f2f4; border-left: 1px solid #e0e2e5; display: flex; flex-direction: column; justify-content: space-between; align-items: center; font-size: 6px; color: #335; margin-right: 1px; }
.sb i { flex: 1; max-height: 8px; width: 6px; margin-bottom: auto; border: 1px solid #c3c8ce; background: #fafafa; }
.read { display: flex; justify-content: space-between; border-right: 5px solid #bdc1c7; background: #fff; }
.rc { padding: 13px 0 0 7px; width: 286px; font-family: "Liberation Sans", sans-serif; color: #000; }
.o5 .rc { padding: 16.500px 0 0 5px; }
.read .sb { padding-top: 12px; }
.read .sb i { max-height: 70px; }
h3 { font-size: 11px; line-height: 13px; }
.o5 h3 { font-size: 11.180px; }
.from { font-size: 10.180px; line-height: 12px; margin-top: 4.700px; }
.meta { font-size: 8px; line-height: 10px; display: flex; }
.meta span { width: 27.500px; color: #999; }
.dots { border-top: 1px dashed #c3c3c3; width: 268px; margin: 6.500px 0 12.500px 2px; }
.todo { background: #eef0f3; display: flex; flex-direction: column; overflow: hidden; }
.cal { height: 168px; position: relative; flex: none; }
.cal h5 { font-weight: normal; font-size: 5.400px; padding: 8px 0 0 12px; height: 16px; display: flex; gap: 20px; color: #333; }
.days { display: grid; grid-template-columns: repeat(6, 11.500px); grid-auto-rows: 7.500px; padding-left: 10px; text-align: center; font-size: 5.200px; align-items: center; color: #222; }
.days u { text-decoration: none; height: 8px; border-bottom: 1px solid #bbb; }
.days i { color: #aaa; }
.today { position: absolute; left: 79px; top: 38px; width: 9px; height: 8px; border: 1px solid #e59a62; }
.ab { height: 10px; background: linear-gradient(#eceef1, #d3d7dc); border-top: 1px solid #b9bdc3; display: flex; align-items: center; justify-content: space-between; padding: 0 5px 0 1px; flex: none; }
.nt { flex: 1; background: #fff; padding: 4px 0 0 4px; color: #888; box-shadow: inset 0 2px #eef0f3; position: relative; }
.nt::after { content: ""; position: absolute; left: 1px; top: 2px; width: 80px; height: 9px; border: 1px solid #c8ccd1; }
.stat { height: 9px; background: linear-gradient(#f0f1f3, #dfe1e4); display: flex; align-items: center; padding: 0 3px; color: #666; }
.stat .z { margin-left: auto; padding-right: 4px; }
.stat svg { width: 68px; height: 8px; }

/* notification email */
.email { font-family: "Open Sans", "Noto Sans", sans-serif; font-size: 5.500px; color: #555; line-height: 1; width: 265px; margin-left: 2.600px; }
.o5 .email { zoom: 1.021; margin-left: 1.600px; }
.above { line-height: 6.800px; height: 19.500px; color: #222; font-size: 5.300px; }
.ep { background: #e1e6ee; padding: 4.700px; display: flex; flex-direction: column; gap: 4.600px; border-top: 1px solid #d5d9df; }
.card { background: #fff; border-radius: 2px; }
.ep a { color: #24447c; text-decoration: underline; font-weight: 600; }
.k1 { height: 26px; display: flex; justify-content: flex-end; padding: 5px 4.500px; }
.k1 .logo { font-size: 15.500px; transform-origin: 100% 50%; }
.k2 { height: 69px; padding: 7.500px 0 0 9px; }
.eh { display: flex; justify-content: space-between; height: 17px; padding-right: 10px; line-height: 12px; }
time { line-height: 5.800px; font-size: 4.900px; color: #777; padding-top: 1.500px; }
.em { display: flex; gap: 6px; line-height: 12.200px; color: #222; }
.em svg { width: 20px; height: 21px; margin-top: 2px; }
.em p { margin-left: .5px; }
.em a, .hist a { font-weight: normal; }
.k2.long { height: 110.800px; }
.k2 h5 { font-weight: normal; font-size: 5.400px; height: 10px; padding-top: 2px; margin: 6.500px 14px 0 0; border-bottom: 1px solid #ddd; }
.hist { display: flex; padding: 3px 10px 0 27px; gap: 6px; line-height: 12px; color: #222; }
.hist svg { width: 13px; height: 13px; margin-top: 3px; }
.hist time { margin-left: auto; }
.k3 { height: 50.400px; padding: 8px 0 0 6.500px; }
.k3 h5 { font-weight: normal; font-size: 5.300px; height: 12px; }
.pp { display: flex; line-height: 5.900px; font-size: 4.800px; }
.pp > div { display: flex; gap: 8px; width: 80px; }
.pp svg { width: 12px; height: 13px; margin-top: 1px; }
.pp a { display: block; line-height: 7.500px; font-size: 5.300px; margin-bottom: 1.500px; }
.k4 { height: 20.400px; display: flex; align-items: center; padding-left: 8.500px; font-size: 5.050px; }
.k4 b { color: #f2a71b; width: 16px; }
.k5 { height: 22px; display: flex; padding: 5px 0 0 5px; line-height: 6.300px; font-size: 4.900px; }
.k5 .logo { font-size: 7.600px; width: 26.500px; }

/* reply window */
.win { left: 156px; top: 7px; width: 483px; height: 454px; border: 1px solid #3d4650; border-bottom-width: 2px; border-radius: 3px 3px 0 0; background: #b9d6f2; padding: 0 3px; font-family: "Open Sans", "Noto Sans", sans-serif; font-size: 5.200px; color: #333; }
.wt { height: 14px; margin: 0 -3px; padding: 0 2px 0 5px; background: linear-gradient(90deg, #66717f, #a3bbd2 12%, #b3cbe3 50%, #93aac2 58%, #b5cde5 66%, #a9c1d9 74%, #c3d9ee); display: flex; justify-content: space-between; align-items: center; font-size: 5.500px; color: #111; }
.qa { display: flex; gap: 4px; align-items: center; }
.qa i { width: 6px; height: 6px; border-radius: 3px; background: #d3e0ef; }
.qa .sq { background: #3a56b0; border-radius: 1px; }
.wb { display: flex; align-self: flex-start; height: 9px; }
.wb i { width: 12px; border: 1px solid #6b7c8f; background: #c3d0dd; }
.wb .x { width: 20px; background: #c94b37; color: #fff; text-align: center; line-height: 6px; }
.wtabs { height: 10px; background: #d4e1ef; display: flex; align-items: center; }
.wtabs > * { text-align: center; width: 33px; }
.wtabs b { width: 25.500px; height: 10px; line-height: 10px; background: linear-gradient(#f9b13a, #ee8b10); color: #fff; }
.wtabs span:nth-child(2) { width: 37px; }
.wtabs .ins { background: #fff; height: 10px; line-height: 10px; width: 20px; }
.wtabs .ins + span { width: 38px; }
.wtabs .ins + span + span { width: 34px; }
.wtabs em { margin-left: auto; width: 8px; height: 8px; border-radius: 4px; background: #2f73c4; color: #fff; line-height: 8px; margin-right: 1px; }
.win .rib { height: 39px; grid-template-columns: 114.500px 23px 131px 40px 103px 51px 1fr; border-bottom: 1px solid #a3abb5; }
.win .g .r { height: 31px; }
.win .bb { padding-top: 2.500px; line-height: 6.400px; }
.win .bb svg, .win .ic { height: 13px; margin-bottom: 2.500px; }
.win .sm { padding-top: 1px; }
.off { color: #aaa; }
.ic { display: block; font: 11px/13px "Liberation Serif", serif; border: 1px solid #ccc; }
.wa { border: 0; font-size: 15px; font-style: italic; color: #999; }
.ta { line-height: 11px; color: #888; }
.sy b { width: 7px; font-size: 8px; text-align: center; }
.om { color: #2f62b4; }
.hdr { background: #e6eaf0; height: 64.500px; display: flex; padding: 5.500px 2px 0 3px; gap: 5px; }
.sendb { width: 21.500px; height: 33px; border: 1px solid #c3cad3; background: linear-gradient(#fff, #e8ecf1); display: flex; flex-direction: column; align-items: center; gap: 3px; padding-top: 9px; }
.sendb svg { width: 12px; height: 7px; }
.fl { flex: 1; display: grid; grid-template-columns: 28.500px 1fr; grid-auto-rows: 10px; row-gap: 2px; column-gap: 4px; }
.fl b { font-weight: normal; border: 1px solid #c3cad3; background: linear-gradient(#fff, #e8ecf1); display: flex; align-items: center; justify-content: center; }
.fl span { border: 1px solid #b4bcc7; background: #fff; font: 6.300px/9px "Liberation Sans", sans-serif; padding: 0 0 0 5px; color: #111; }
.fl .pl { border-color: transparent; background: none; }
.wbody { height: 301px; background: #fff; border: 1px solid #b4bcc7; display: flex; justify-content: space-between; margin: 0 2px; }
.wc { padding: 14px 0 0 11px; }
.wc .email { margin-left: 2px; }
.wc .above { height: 18px; }
.hello { font: 8.700px/11px "Liberation Sans", sans-serif; color: #000; height: 20px; margin-left: 1px; }
.win .sb { width: 8px; }
.wf { height: 21px; background: #f0f2f5; padding: 2.500px 2px 0; }
.wf div { height: 3px; background: #d0d5dc; }
.wf p { text-align: right; padding: 5px 3px 0; }
.shade { width: 292px; height: 3px; background: #20262c; margin-left: 4px; }
.vline { position: absolute; left: 143px; top: 96px; width: 1px; height: 114px; background: #bbb; }

/* footer */
.foot { flex: 1; display: flex; justify-content: space-between; margin-top: 19px; padding-left: 14px; font-size: 12px; align-items: flex-start; }
.foot dl { display: grid; grid-template-columns: 66.500px auto; line-height: 25px; }
.foot dt { color: #bbb; }
.foot dd { font-weight: bold; color: #555; }
.pageno { border-left: 1px solid #ccc; width: 116px; height: 50px; padding-left: 22px; font-size: 17px; font-weight: bold; color: #8c8c8c; line-height: 51px; }
```
